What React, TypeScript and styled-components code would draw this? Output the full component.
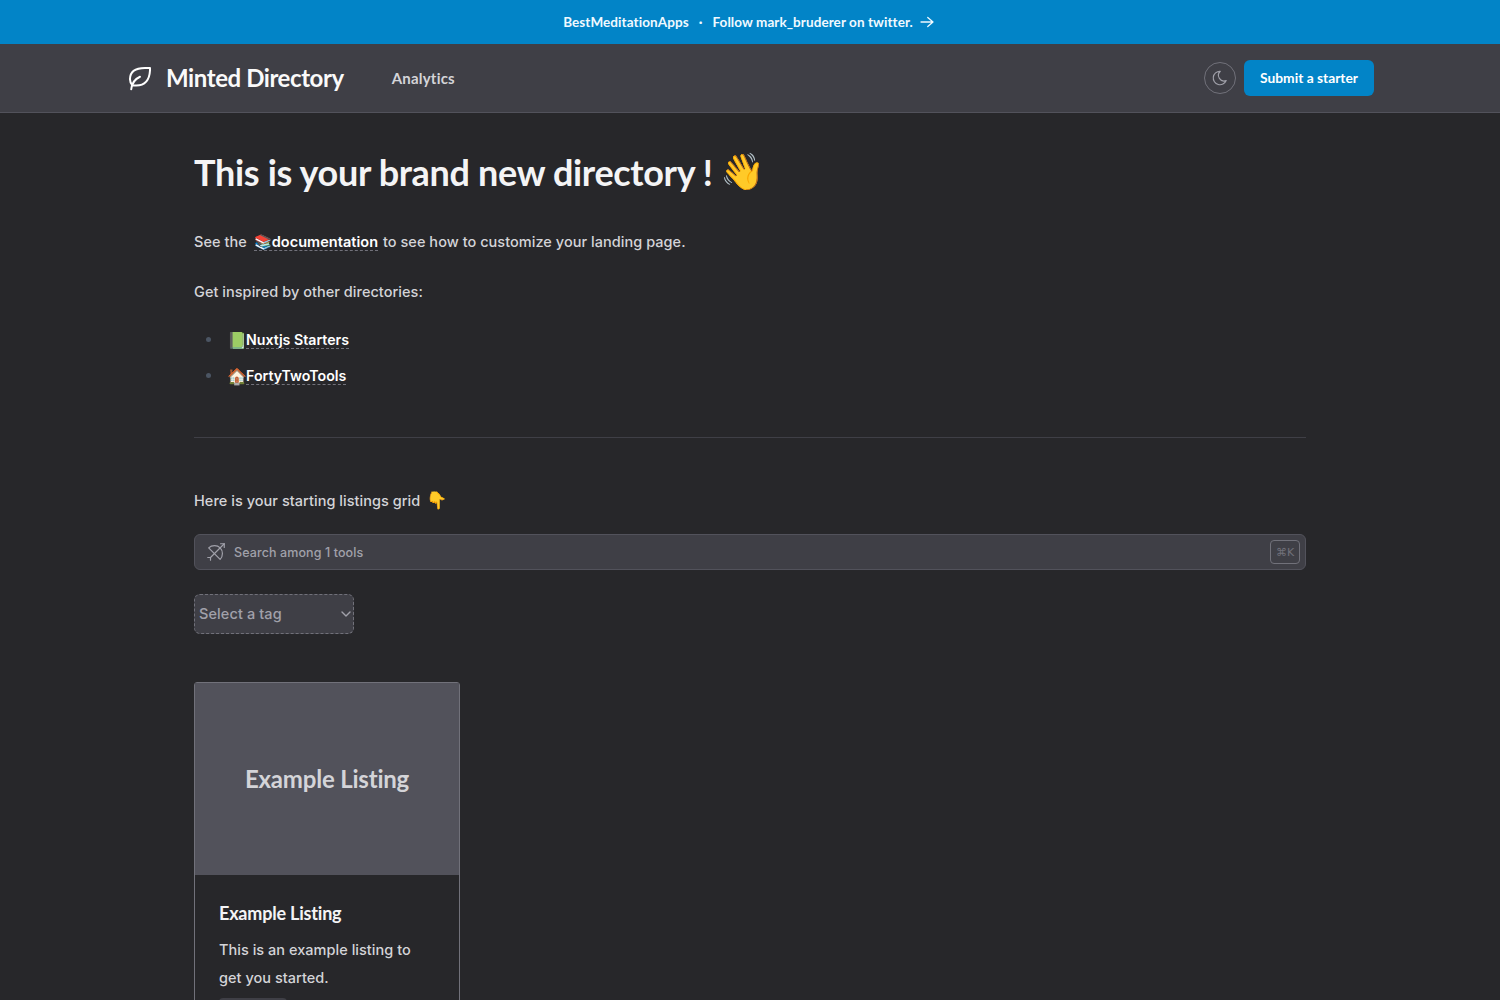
import React from "react";
import styled, { createGlobalStyle } from "styled-components";

const GlobalStyle = createGlobalStyle`
	html, body {
		margin: 0;
		height: 1000px;
		overflow: hidden;
		background: #27272a;
		font-family: "Lato", "Open Sans", sans-serif;
	}
	* { box-sizing: border-box; }
`;

const Banner = styled.div`
	height: 44px;
	background: #0284c7;
	color: #f0f9ff;
	display: flex;
	align-items: center;
	justify-content: center;
	font-size: 13.5px;
	font-weight: 700;
	letter-spacing: 0.08px;
`;

const BannerDot = styled.span`
	margin: 0 10px;
`;

const BannerArrow = styled.svg`
	width: 18px;
	height: 18px;
	margin-left: 5px;
	margin-right: 1px;
	fill: none;
	stroke: #f0f9ff;
	stroke-width: 1.7;
	stroke-linecap: round;
	stroke-linejoin: round;
`;

const Nav = styled.nav`
	height: 69px;
	background: #3f3f46;
	border-bottom: 1px solid #52525b;
	display: flex;
	align-items: center;
	justify-content: space-between;
	padding: 0 126px 0 125px;
`;

const NavLeft = styled.div`
	display: flex;
	align-items: center;
`;

const Logo = styled.svg`
	width: 30px;
	height: 30px;
	fill: none;
	stroke: #fff;
	stroke-width: 1.6;
	stroke-linecap: round;
	stroke-linejoin: round;
`;

const Brand = styled.span`
	margin-left: 11px;
	margin-top: -2px;
	color: #fafafa;
	font-size: 24px;
	font-weight: 700;
	letter-spacing: -0.42px;
`;

const NavLink = styled.span`
	margin-left: 48px;
	color: #d4d4d8;
	font-size: 15px;
	font-weight: 700;
	letter-spacing: 0.2px;
`;

const NavRight = styled.div`
	display: flex;
	align-items: center;
	gap: 8px;
`;

const ThemeButton = styled.div`
	width: 32px;
	height: 32px;
	border-radius: 50%;
	border: 1px solid #71717a;
	display: flex;
	align-items: center;
	justify-content: center;
`;

const MoonIcon = styled.svg`
	width: 18px;
	height: 18px;
	fill: none;
	stroke: #a1a1aa;
	stroke-width: 1.5;
	stroke-linecap: round;
	stroke-linejoin: round;
`;

const SubmitButton = styled.div`
	width: 130px;
	height: 36px;
	padding-bottom: 2px;
	border-radius: 6px;
	background: #0284c7;
	color: #fff;
	font-size: 13.8px;
	font-weight: 700;
	display: flex;
	align-items: center;
	justify-content: center;
`;

const Main = styled.main`
	width: 1112px;
	margin: 0 auto;
`;

const Title = styled.h1`
	margin: 35px 0 0;
	height: 49px;
	line-height: 48px;
	color: #f4f4f5;
	font-size: 36px;
	font-weight: 700;
	letter-spacing: -0.33px;
`;

const TitleEmoji = styled.span`
	position: relative;
	top: -2px;
	margin-left: -1px;
`;

const Paragraph = styled.p`
	margin: 0;
	color: #d4d4d8;
	font-family: "Inter", sans-serif;
	font-size: 14.5px;
	font-weight: 500;
	letter-spacing: 0.04px;
	line-height: 26px;
	height: 26px;
`;

const Intro = styled(Paragraph)`
	margin-top: 32px;
`;

const Inspired = styled(Paragraph)`
	margin-top: 24px;
`;

const TextLink = styled.span`
	color: #fff;
	font-weight: 600;
	border-bottom: 1px dashed #71717a;
`;

const IntroLink = styled(TextLink)`
	margin-left: 3px;
	margin-right: 1px;
`;

const LinkList = styled.ul`
	list-style: none;
	margin: 22px 0 0;
	padding: 0 0 0 12px;
	display: flex;
	flex-direction: column;
	gap: 10px;
`;

const LinkItem = styled.li`
	display: flex;
	align-items: center;
	height: 26px;
	font-family: "Inter", sans-serif;
	font-size: 14.2px;
`;

const Bullet = styled.span`
	width: 5px;
	height: 5px;
	margin: -1px 16px 0 0;
	border-radius: 50%;
	background: #4b5563;
`;

const ItemEmoji = styled.span`
	width: 19px;
	font-size: 16px;
`;

const Divider = styled.hr`
	margin: 48px 0 0;
	border: 0;
	border-top: 1px solid #3f3f46;
`;

const GridIntro = styled(Paragraph)`
	margin-top: 49px;
`;

const PointEmoji = styled.span`
	margin-left: 2px;
	font-size: 17px;
`;

const SearchBar = styled.div`
	margin-top: 21px;
	height: 36px;
	border: 1px solid #52525b;
	border-radius: 6px;
	background: #3f3f46;
	display: flex;
	align-items: center;
	padding: 0 5px 0 10px;
`;

const SearchIcon = styled.svg`
	width: 22px;
	height: 22px;
	fill: none;
	stroke: #a1a1aa;
	stroke-width: 1.3;
	stroke-linecap: round;
	stroke-linejoin: round;
`;

const SearchText = styled.span`
	margin-left: 7px;
	flex: 1;
	color: #a1a1aa;
	font-family: "Inter", sans-serif;
	font-size: 12.5px;
	font-weight: 500;
	letter-spacing: 0.1px;
`;

const Kbd = styled.span`
	width: 30px;
	height: 24px;
	border: 1px solid #71717a;
	border-radius: 4px;
	color: #71717a;
	font-family: "DejaVu Sans", sans-serif;
	font-size: 11px;
	display: flex;
	align-items: center;
	justify-content: center;
`;

const TagSelect = styled.div`
	margin-top: 24px;
	width: 160px;
	height: 40px;
	border: 1px dashed #71717a;
	border-radius: 6px;
	background: #3f3f46;
	color: #a1a1aa;
	font-family: "Inter", sans-serif;
	font-size: 14.5px;
	font-weight: 500;
	letter-spacing: 0.1px;
	display: flex;
	align-items: center;
	justify-content: space-between;
	padding: 0 1px 2px 4px;
`;

const ChevronIcon = styled.svg`
	width: 12px;
	height: 12px;
	margin-top: 2px;
	fill: none;
	stroke: #a1a1aa;
	stroke-width: 1.4;
	stroke-linecap: round;
	stroke-linejoin: round;
`;

const Card = styled.article`
	margin-top: 48px;
	width: 266px;
	height: 400px;
	border: 1px solid #71717a;
	border-radius: 3px 3px 0 0;
`;

const CardImage = styled.div`
	height: 192px;
	padding-bottom: 2px;
	background: #52525b;
	color: #d4d4d8;
	font-size: 24px;
	font-weight: 700;
	letter-spacing: -0.2px;
	display: flex;
	align-items: center;
	justify-content: center;
`;

const CardBody = styled.div`
	padding: 24px 24px 0;
`;

const CardTitle = styled.h3`
	margin: 0;
	color: #f4f4f5;
	font-size: 18px;
	font-weight: 700;
	letter-spacing: -0.2px;
	line-height: 28px;
`;

const CardText = styled.p`
	margin: 9px 0 0;
	color: #d4d4d8;
	font-family: "Inter", sans-serif;
	font-size: 14.5px;
	font-weight: 500;
	letter-spacing: 0.03px;
	line-height: 28px;
`;

const CardTag = styled.div`
	margin-top: 6px;
	width: 68px;
	height: 24px;
	border-radius: 4px;
	background: #3f3f46;
`;

export default function App() {
	return (
		<>
			<GlobalStyle />
			<Banner>
				BestMeditationApps
				<BannerDot>·</BannerDot>
				Follow mark_bruderer on twitter.
				<BannerArrow viewBox="0 0 24 24">
					<path d="M4 12h16M13 18l7-6-7-6" />
				</BannerArrow>
			</Banner>
			<Nav>
				<NavLeft>
					<Logo viewBox="0 0 24 24">
						<path d="M5 21c.5-4.500 2.500-8 7-10" />
						<path d="M9 18c6.218 0 10.500-3.288 11-12v-2h-4.014c-9 0-11.986 4-12 9 0 1 0 3 2 5h3z" />
					</Logo>
					<Brand>Minted Directory</Brand>
					<NavLink>Analytics</NavLink>
				</NavLeft>
				<NavRight>
					<ThemeButton>
						<MoonIcon viewBox="0 0 24 24">
							<path d="M12 3c.132 0 .263 0 .393 0a7.500 7.500 0 0 0 7.920 12.446a9 9 0 1 1-8.313-12.454z" />
						</MoonIcon>
					</ThemeButton>
					<SubmitButton>Submit a starter</SubmitButton>
				</NavRight>
			</Nav>
			<Main>
				<Title>
					This is your brand new directory ! <TitleEmoji>👋</TitleEmoji>
				</Title>
				<Intro>
					See the <IntroLink>📚documentation</IntroLink> to see how to customize your landing page.
				</Intro>
				<Inspired>Get inspired by other directories:</Inspired>
				<LinkList>
					<LinkItem>
						<Bullet />
						<ItemEmoji>📗</ItemEmoji>
						<TextLink>Nuxtjs Starters</TextLink>
					</LinkItem>
					<LinkItem>
						<Bullet />
						<ItemEmoji>🏠</ItemEmoji>
						<TextLink>FortyTwoTools</TextLink>
					</LinkItem>
				</LinkList>
				<Divider />
				<GridIntro>
					Here is your starting listings grid <PointEmoji>👇</PointEmoji>
				</GridIntro>
				<SearchBar>
					<SearchIcon viewBox="0 0 24 24">
						<path d="M17 3h4v4" />
						<path d="M21 3 6 18" />
						<path d="M3 18h3v3" />
						<path d="M16.500 20c1.576-1.576 2.500-4.095 2.500-6.500 0-4.810-3.690-8.500-8.500-8.500-2.415 0-4.922.913-6.500 2.500l12.500 12.500z" />
					</SearchIcon>
					<SearchText>Search among 1 tools</SearchText>
					<Kbd>⌘K</Kbd>
				</SearchBar>
				<TagSelect>
					Select a tag
					<ChevronIcon viewBox="0 0 12 12">
						<path d="M2 4l4 4 4-4" />
					</ChevronIcon>
				</TagSelect>
				<Card>
					<CardImage>Example Listing</CardImage>
					<CardBody>
						<CardTitle>Example Listing</CardTitle>
						<CardText>This is an example listing to get you started.</CardText>
						<CardTag />
					</CardBody>
				</Card>
			</Main>
		</>
	);
}
